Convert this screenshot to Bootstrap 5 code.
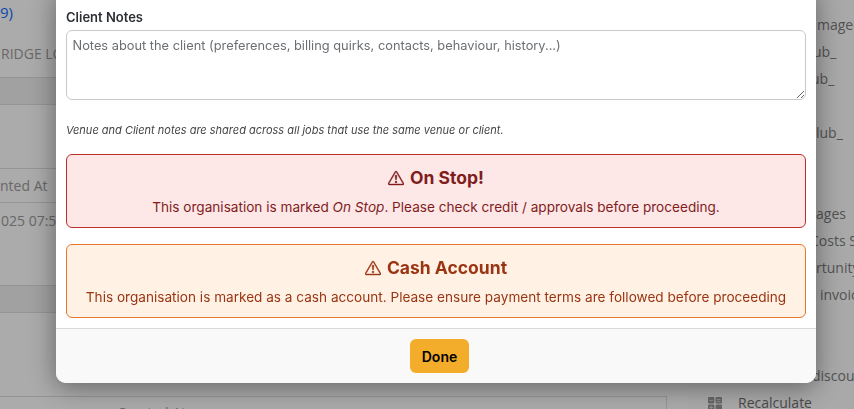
<!DOCTYPE html>
<html lang="en">
<head>
<meta charset="utf-8">
<title>Client Notes</title>
<link href="https://cdn.jsdelivr.net/npm/bootstrap@5.3.0/dist/css/bootstrap.min.css" rel="stylesheet">
<style>
html,body{height:409px;overflow:hidden;background:#fff}
.page-layer{height:409px;font-family:"Open Sans",sans-serif;font-size:14px;line-height:20px;color:#9b9b9b;white-space:nowrap;overflow:hidden}
.main-pane{width:688px;flex:none;padding-right:21px}
.side-pane{width:166px;flex:none;background:#fdfdfd;color:#7c7c7c;padding-top:12.4px}
.tr{border-bottom:1px solid #dedede;overflow:hidden}
.tr-band{background:#f0f0f0}
.r-top{height:78px;padding-top:2px}
.r-band{height:27px}
.r-gap{height:64px}
.r-head{height:34px;padding-top:7px}
.r-val{height:83px;padding:8px 0 0 1px}
.r-tall{height:84px}
.r-last{padding:6px 0 0 117px;border-right:1px solid #dedede;height:13px;overflow:hidden}
.link-part{color:#0d6efd;font-size:15px;margin-bottom:22px}
.org-name{padding-left:1px}
.side-row{height:26.95px;line-height:26.95px}
.s-817{padding-left:129px}
.s-813{padding-left:125px}
.s-811{padding-left:123px}
.s-816{padding-left:128px}
.s-810{padding-left:122px}
.s-820{padding-left:132px}
.s-812{padding-left:124px}
.recalc{color:#6f6f6f;padding-left:20px;gap:16px}
.recalc svg{color:#9a9a9a;margin-top:2px}
.shade{background:#000}
.shade.show{opacity:.33}
.dlg{position:absolute;left:56px;top:-10px;width:760px;z-index:1060;background:#fff;border:0;border-radius:0 0 10px 10px;font-family:Inter,sans-serif;box-shadow:0 4px 26px rgba(0,0,0,.42)}
.dlg-body{padding:20px 10px 10px}
.lbl{font-size:13px;font-weight:600;line-height:15px;color:#2b2f33;margin-bottom:5px;display:block}
.notes{height:70px;font-size:12.82px;line-height:18px;padding:6px 6px 6px 5.5px;border:1px solid #c9c9c9;border-radius:6px;color:#444}
.notes::placeholder{color:#6b6f73;opacity:1}
.hint{font-size:11px;font-style:italic;line-height:14px;color:#444;margin:23px 0 17px}
.flag{border:1px solid;border-radius:6px;text-align:center;font-size:13.6px;padding:12px 8px 0;margin:0 0 16px}
.flag h5{font-size:17.5px;font-weight:700;line-height:22px;margin:0 0 10px;color:inherit;display:flex;justify-content:center;align-items:center;gap:6px}
.flag p{margin:0;line-height:17px}
.flag-red{height:74px;background:#fde7e7;border-color:#bf2f2a;color:#7f1d1d}
.flag-org{height:74px;margin-bottom:0;background:#fff2e5;border-color:#e8782f;color:#9a3412}
.dlg-foot{height:55px;background:#f9f9f9;border-top:1px solid #d9d9d9;border-radius:0 0 10px 10px;padding:0;justify-content:center;align-items:center}
.done{background:#f4ad2b;border:0;color:#000;font-size:14px;font-weight:600;width:59px;height:34px;padding:0;border-radius:6px;margin:0 0 0 7px}
</style>
</head>
<body>
<div class="page-layer d-flex">
  <div class="main-pane">
    <div class="tr r-top">
      <div class="link-part">9)</div>
      <div class="org-name">RIDGE LO</div>
    </div>
    <div class="tr tr-band r-band"></div>
    <div class="tr r-gap"></div>
    <div class="tr r-head">nted At</div>
    <div class="tr r-val">025 07:5</div>
    <div class="tr tr-band r-band"></div>
    <div class="tr r-tall"></div>
    <div class="r-last">Created At</div>
  </div>
  <div class="side-pane">
    <div class="side-row s-817">maged</div>
    <div class="side-row s-813">ub_</div>
    <div class="side-row s-811">ub_</div>
    <div class="side-row"></div>
    <div class="side-row s-816">lub_</div>
    <div class="side-row"></div>
    <div class="side-row"></div>
    <div class="side-row s-816">ages</div>
    <div class="side-row s-810">Costs S</div>
    <div class="side-row s-816">rtunity</div>
    <div class="side-row s-820">invoic</div>
    <div class="side-row"></div>
    <div class="side-row"></div>
    <div class="side-row s-812">discou</div>
    <div class="side-row recalc d-flex align-items-center">
      <svg width="14" height="14" viewBox="0 0 14 14" fill="currentColor"><rect x="0" y="0" width="6.4" height="6.4" rx="1"/><rect x="7.6" y="0" width="6.4" height="6.4" rx="1"/><rect x="0" y="7.6" width="6.4" height="6.4" rx="1"/><rect x="7.6" y="7.6" width="6.4" height="6.4" rx="1"/><path d="M1.5 3h3.4v.8H1.5zM9 2h3.4v.8H9zM9 4h3.4v.8H9zM2.8 9h.8v3.4h-.8zM1.5 10.3h3.4v.8H1.5z" fill="#e4e4e4"/></svg>
      <span>Recalculate</span>
    </div>
  </div>
</div>
<div class="modal-backdrop show shade"></div>
<div class="modal-content dlg">
  <div class="modal-body dlg-body">
    <label class="form-label lbl" for="cn">Client Notes</label>
    <textarea class="form-control notes" id="cn" placeholder="Notes about the client (preferences, billing quirks, contacts, behaviour, history...)"></textarea>
    <p class="hint">Venue and Client notes are shared across all jobs that use the same venue or client.</p>
    <div class="alert flag flag-red" role="alert">
      <h5><svg width="16" height="16" viewBox="0 0 16 16" fill="currentColor" stroke="currentColor" stroke-width=".4"><path d="M7.938 2.016A.13.13 0 0 1 8.002 2a.13.13 0 0 1 .063.016.146.146 0 0 1 .054.057l6.857 11.667c.036.06.035.124.002.183a.163.163 0 0 1-.054.06.116.116 0 0 1-.066.017H1.146a.115.115 0 0 1-.066-.017.163.163 0 0 1-.054-.06.176.176 0 0 1 .002-.183L7.884 2.073a.147.147 0 0 1 .054-.057zm1.044-.45a1.13 1.13 0 0 0-1.96 0L.165 13.233c-.457.778.091 1.767.98 1.767h13.713c.889 0 1.438-.99.98-1.767L8.982 1.566z"/><path d="M7.002 12a1 1 0 1 1 2 0 1 1 0 0 1-2 0zM7.1 5.995a.905.905 0 1 1 1.8 0l-.35 3.507a.552.552 0 0 1-1.1 0L7.1 5.995z"/></svg>On Stop!</h5>
      <p>This organisation is marked <em>On Stop</em>. Please check credit / approvals before proceeding.</p>
    </div>
    <div class="alert flag flag-org" role="alert">
      <h5><svg width="16" height="16" viewBox="0 0 16 16" fill="currentColor" stroke="currentColor" stroke-width=".4"><path d="M7.938 2.016A.13.13 0 0 1 8.002 2a.13.13 0 0 1 .063.016.146.146 0 0 1 .054.057l6.857 11.667c.036.06.035.124.002.183a.163.163 0 0 1-.054.06.116.116 0 0 1-.066.017H1.146a.115.115 0 0 1-.066-.017.163.163 0 0 1-.054-.06.176.176 0 0 1 .002-.183L7.884 2.073a.147.147 0 0 1 .054-.057zm1.044-.45a1.13 1.13 0 0 0-1.96 0L.165 13.233c-.457.778.091 1.767.98 1.767h13.713c.889 0 1.438-.99.98-1.767L8.982 1.566z"/><path d="M7.002 12a1 1 0 1 1 2 0 1 1 0 0 1-2 0zM7.1 5.995a.905.905 0 1 1 1.8 0l-.35 3.507a.552.552 0 0 1-1.1 0L7.1 5.995z"/></svg>Cash Account</h5>
      <p>This organisation is marked as a cash account. Please ensure payment terms are followed before proceeding</p>
    </div>
  </div>
  <div class="modal-footer dlg-foot">
    <button type="button" class="btn done">Done</button>
  </div>
</div>
<script src="https://cdn.jsdelivr.net/npm/bootstrap@5.3.0/dist/js/bootstrap.bundle.min.js"></script>
</body>
</html>
